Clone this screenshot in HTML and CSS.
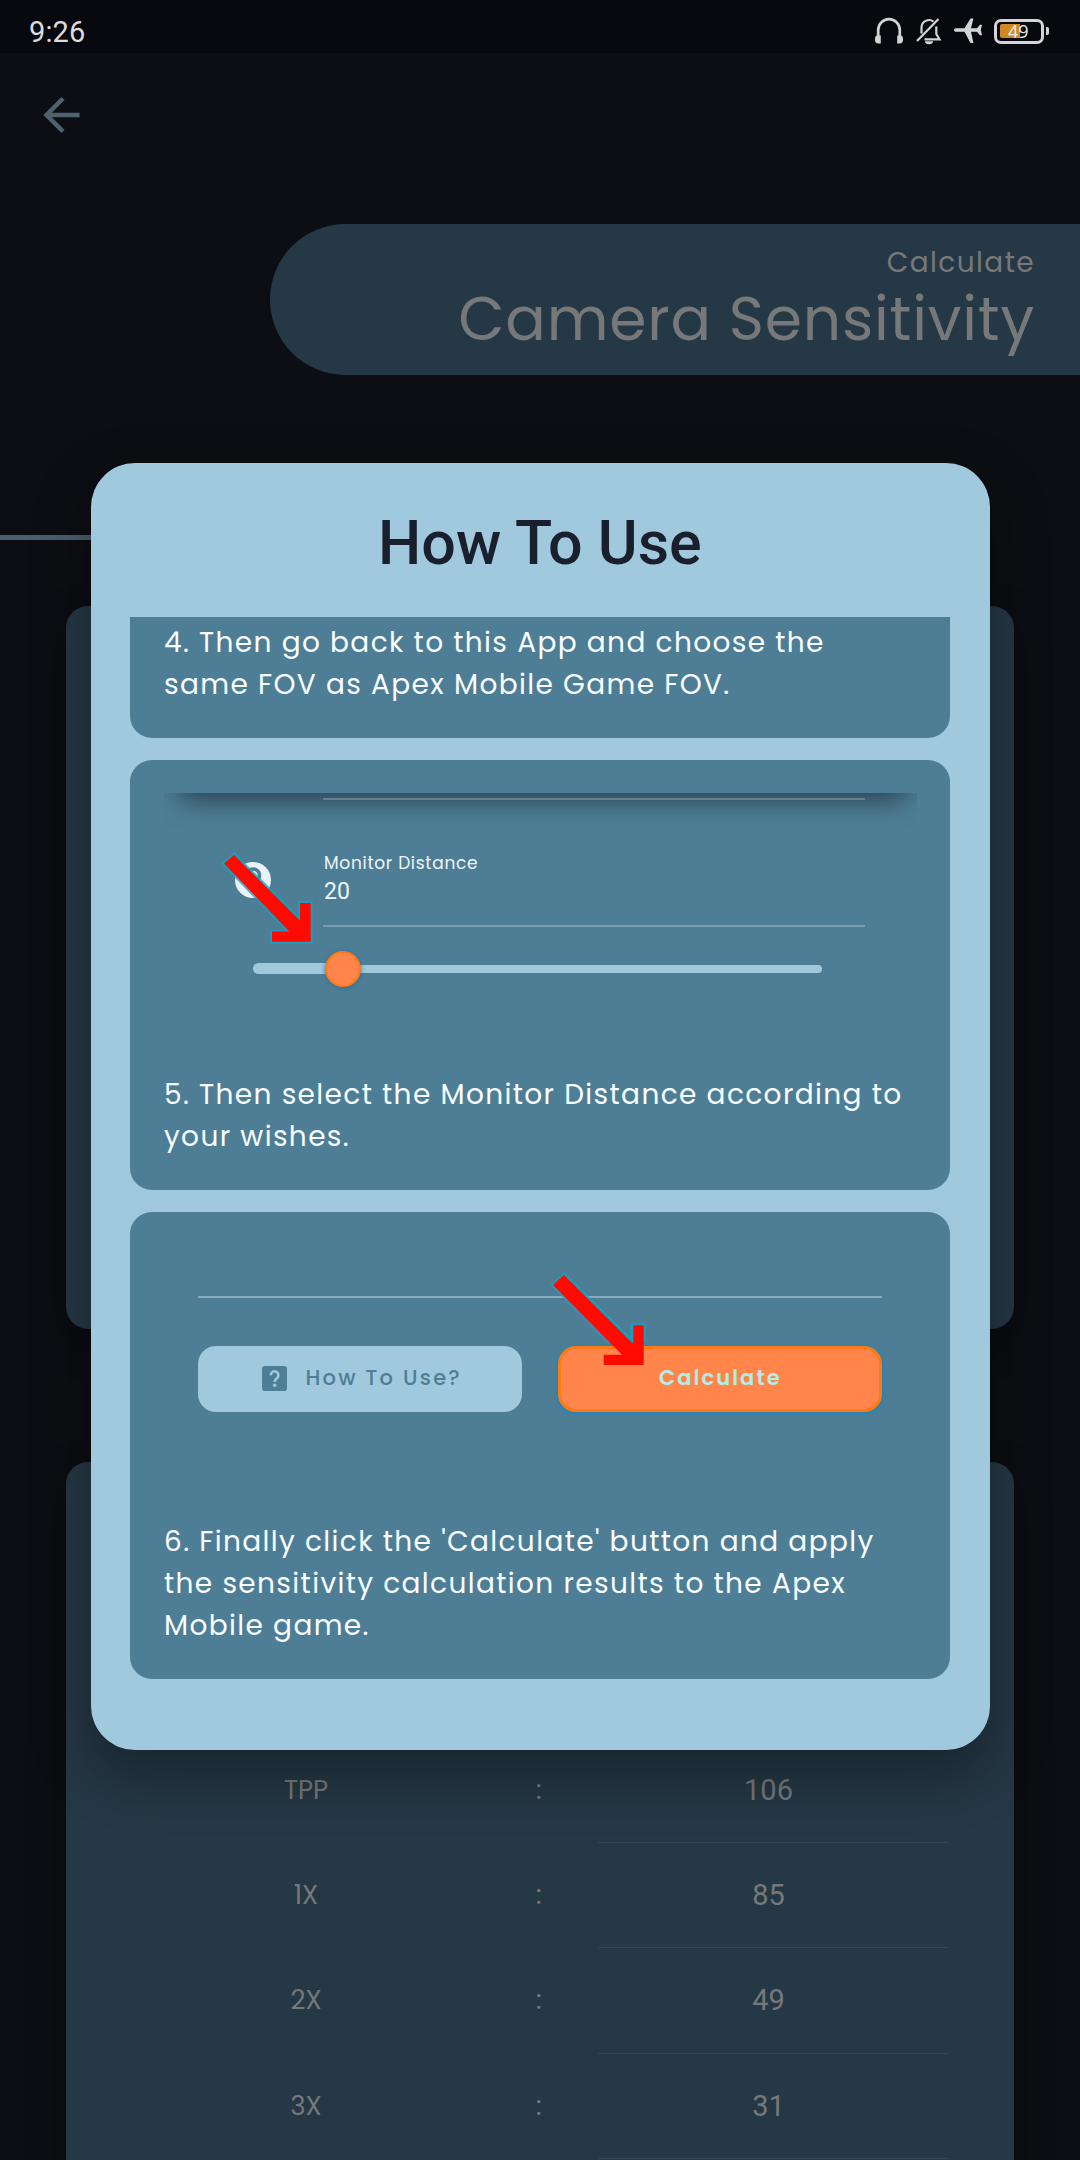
FILE: index.html
```html
<!DOCTYPE html>
<html lang="en">
<head>
<meta charset="utf-8">
<title>Camera Sensitivity</title>
<link rel="stylesheet" href="styles.css">
</head>
<body>
<div class="screen">
  <header class="status">
    <span class="time">9:26</span>
    <div class="status-icons">
      <svg class="ic-head" viewBox="0 0 28 26"><path d="M3.2 19V12A10.8 10.8 0 0 1 24.8 12V19" fill="none" stroke="#d4d4d4" stroke-width="2.7"/><path d="M2 17.5h3.8v7.9H3.4A3.4 3.4 0 0 1 0 22v-1.500a3 3 0 0 1 2-3zM26 17.500h-3.800v7.900h2.400A3.400 3.400 0 0 0 28 22v-1.500a3 3 0 0 0-2-3z" fill="#d4d4d4"/></svg>
      <svg class="ic-bell" viewBox="0 0 26 26"><g fill="none" stroke="#d4d4d4" stroke-width="2.2"><path d="M5.500 15.500V9.500A7.500 7.500 0 0 1 17.500 3.600M20.300 8.500v7.500l3.200 5.300H8.500M1 23 22.500 1"/></g><path d="M9 23.200h8a4 3 0 0 1-8 0z" fill="#d4d4d4"/></svg>
      <svg class="ic-plane" viewBox="0 0 28 26"><path d="M0 12c0-1 1-1.800 2-1.800h8.500L16.500.5h2.900L17 10.200H23l3-3.400h2L26.800 12l1.200 5.200h-2l-3-3.400h-6l2.400 11.300h-2.900L10.500 13.800H2c-1 0-2-.8-2-1.800z" fill="#d4d4d4"/></svg>
      <div class="battery"><div class="battery-fill"></div><span class="battery-num">49</span></div>
      <div class="battery-tip"></div>
    </div>
  </header>

  <nav class="appbar">
    <svg class="back" viewBox="0 0 36 36"><path d="M35.500 18H3M19 1.500 2.500 18 19 34.500" fill="none" stroke="#4e626e" stroke-width="4.500"/></svg>
  </nav>

  <div class="pill">
    <div class="pill-small">Calculate</div>
    <div class="pill-big">Camera Sensitivity</div>
  </div>
  <div class="rule"></div>
  <section class="panel form-panel"></section>
  <section class="panel results">
    <div class="row"><span class="name">TPP</span><span class="colon">:</span><span class="val">106</span></div>
    <div class="row"><span class="name">1X</span><span class="colon">:</span><span class="val">85</span></div>
    <div class="row"><span class="name">2X</span><span class="colon">:</span><span class="val">49</span></div>
    <div class="row"><span class="name">3X</span><span class="colon">:</span><span class="val">31</span></div>
  </section>

  <div class="dialog">
    <h1 class="title">How To Use</h1>
    <div class="steps">
      <article class="step step-4">
        <p class="text">4. Then go back to this App and choose the<br>same FOV as Apex Mobile Game FOV.</p>
      </article>
      <article class="step step-5">
        <div class="demo demo-distance">
          <div class="demo-shadow"></div>
          <div class="field field-top"></div>
          <div class="field">
            <svg class="help" viewBox="0 0 36 36"><circle cx="18" cy="18" r="18" fill="#e9f2f6"/><path d="M11.500 13.500a6.500 6.500 0 1 1 10 5.500q-3.500 2-3.500 5" fill="none" stroke="#4e7e95" stroke-width="3.500"/><circle cx="18" cy="28.500" r="2.200" fill="#4e7e95"/></svg>
            <div class="field-body"><div class="field-label">Monitor Distance</div><div class="field-value">20</div></div>
          </div>
          <div class="slider"><div class="slider-on"></div><div class="slider-off"></div><div class="thumb"></div></div>
          <svg class="arrow arrow-distance" viewBox="-4 -4 96 96"><path d="M10 0 76 65.500V48H86.700V86.700H48V76.400H65.300L0 8.400z" fill="none" stroke="#15a2c6" stroke-opacity=".8" stroke-width="4"/><path d="M10 0 76 65.500V48H86.700V86.700H48V76.400H65.300L0 8.400z" fill="#ff0a00"/></svg>
        </div>
        <p class="text">5. Then select the Monitor Distance according to<br>your wishes.</p>
      </article>
      <article class="step step-6">
        <div class="demo demo-buttons">
          <div class="demo-rule"></div>
          <div class="buttons">
            <div class="btn btn-how">
              <svg class="q" viewBox="0 0 25 25"><rect width="25" height="25" rx="2.800" fill="#4e7e95"/><path d="M8.800 9.300a3.800 3.800 0 1 1 6.300 2.700q-2.400 1.800-2.400 4" fill="none" stroke="#9fc8dc" stroke-width="2.600"/><circle cx="12.700" cy="19.300" r="1.800" fill="#9fc8dc"/></svg>
              <span>How To Use?</span>
            </div>
            <div class="btn btn-calc"><span>Calculate</span></div>
          </div>
          <svg class="arrow arrow-calc" viewBox="-4 -4 98 98"><path d="M57 67 0 10 11 0 79 67V50.300H90.700V67" fill="none" stroke="#15a2c6" stroke-opacity=".8" stroke-width="4"/><path d="M11 0 80.300 69V50.300H90.700V90H50.700V79.700H69L0 10z" fill="#ff0a00"/></svg>
        </div>
        <p class="text">6. Finally click the 'Calculate' button and apply<br>the sensitivity calculation results to the Apex<br>Mobile game.</p>
      </article>
    </div>
  </div>
</div>
</body>
</html>
```
FILE: styles.css
```css
* { box-sizing: border-box; }
body { margin: 0; background: #0d0e13; font-family: Poppins, Inter, sans-serif; }
svg { display: block; overflow: visible; flex: none; }

.screen { position: relative; width: 1080px; height: 2160px; overflow: hidden; display: flex; flex-direction: column; }

.status { height: 53px; flex: none; background: #07090e; display: flex; justify-content: space-between; padding: 0 31px 0 29px; }
.time { font: 400 29px/65px Roboto, sans-serif; color: #dcdcdc; letter-spacing: .1px; }
.status-icons { display: flex; align-items: center; height: 62px; }
.ic-head { width: 28px; height: 26px; margin-right: 13px; }
.ic-bell { width: 26px; height: 26px; margin-right: 12px; }
.ic-plane { width: 28px; height: 26px; margin-right: 12px; }
.battery { position: relative; width: 50px; height: 25px; border: 3px solid #d4d4d4; border-radius: 7px; padding: 2.500px; }
.battery-fill { width: 20px; height: 14px; border-radius: 2px 0 0 2px; background: #cf8b22; }
.battery-num { position: absolute; inset: 0 0 0 7px; font: 500 18px/18px "Open Sans", sans-serif; color: #eee; padding-left: 4px; }
.battery-tip { width: 3px; height: 8px; margin: 0 0 0 2px; background: #d4d4d4; border-radius: 0 2px 2px 0; }

.appbar { height: 170px; flex: none; padding: 43.500px 0 0 44px; }
.back { width: 36px; height: 36px; }

.pill { flex: none; height: 151px; margin: .5px 0 0 270px; padding: 18.500px 45px 0 0; border-radius: 76px 0 0 76px; background: #253845; color: #777879; text-align: right; }
.pill-small { font-size: 28px; line-height: 41px; letter-spacing: 1.400px; }
.pill-big { font-size: 60px; line-height: 72px; letter-spacing: .8px; }

.rule { flex: none; width: 300px; height: 5px; margin-top: 160.500px; background: #4a5f6b; }

.panel { flex: none; width: 948px; margin-left: 66px; border-radius: 22px; background: #253845; box-shadow: 0 14px 36px rgba(0, 0, 0, .35); }
.form-panel { height: 723px; margin-top: 66px; }
.results { height: 900px; margin-top: 133px; padding: 275.500px 66px 0 0; }
.row { height: 105.400px; display: grid; grid-template-columns: 462px 70px 350px; color: #777879; }
.name { text-align: center; font-size: 26px; line-height: 105px; padding-left: 18px; letter-spacing: -.1px; }
.colon { font-size: 26px; line-height: 105px; padding-left: 8px; }
.val { font: 400 29px/105px Roboto, sans-serif; text-align: center; padding-right: 9px; height: 105.400px; border-bottom: 1.500px solid #334650; }

/* Dialog */
.dialog { position: absolute; left: 90.500px; top: 463px; width: 899px; height: 1287px; border-radius: 44px; background: #a0c9dd; padding: 44px 39.700px 0 39.500px; box-shadow: 0 22px 54px 6px rgba(0, 0, 0, .32); }
.title { margin: 0 0 38px; font: 500 61px/72px Roboto, sans-serif; text-align: center; color: #1a1f2e; }
.steps { display: flex; flex-direction: column; gap: 22px; }
.step { background: #4e7e95; border-radius: 22px; padding: 33px 33px 33px 34px; color: #f8fcfe; }
.step-4 { height: 121px; padding-top: 5px; border-radius: 0 0 22px 22px; }
.step-5 { height: 430px; }
.step-6 { height: 467px; }
.text { margin: 0; font-size: 28px; line-height: 42px; letter-spacing: 1.360px; white-space: nowrap; }
.demo { position: relative; }
.arrow { position: absolute; }

.demo-distance { height: 281px; overflow: hidden; }
.demo-shadow { position: absolute; left: 18px; right: 14px; top: -33px; height: 32px; border-radius: 6px; box-shadow: 0 4px 26px 4px rgba(30, 45, 55, .75); }
.field { position: relative; display: flex; height: 126.500px; margin: 0 52px 0 71px; }
.field-top { height: 7px; }
.field::after { content: ""; position: absolute; left: 88px; right: 0; bottom: 0; height: 2px; background: #7a9db0; }
.field-top::after { background: #63808f; }
.help { width: 36px; height: 36px; margin: 62px 53px 0 0; }
.field-body { color: #eef5f8; padding-top: 50px; }
.field-label { font-size: 17px; line-height: 27px; letter-spacing: .7px; }
.field-value { font: 400 23px/30px Roboto, sans-serif; }
.slider { position: relative; display: flex; align-items: center; height: 36px; margin: 24px 95px 0 89px; }
.slider-on { width: 90px; height: 11px; border-radius: 6px 0 0 6px; background: #a0c9dd; }
.slider-off { flex: 1; height: 8px; border-radius: 0 4px 4px 0; background: #a0c9dd; }
.thumb { position: absolute; left: 72px; top: 0; width: 36px; height: 36px; border-radius: 50%; border: 2.500px solid #ff7a14; background: #ff854b; box-shadow: 0 1px 4px rgba(15, 110, 170, .8); }
.arrow-distance { left: 56px; top: 57.500px; width: 96px; height: 96px; }

.demo-buttons { height: 275.500px; padding: 51px 35px 0 34px; }
.demo-rule { height: 2px; background: #88adbf; }
.buttons { display: grid; grid-template-columns: 1fr 1fr; gap: 36px; margin-top: 47.500px; }
.btn { height: 66.500px; border-radius: 18px; display: flex; align-items: center; font-size: 21px; line-height: 30px; }
.btn span { margin-top: -1px; }
.btn-how { background: #a0c9dd; color: #4e7e95; font-weight: 500; letter-spacing: 2.250px; padding-left: 63.500px; }
.q { width: 25px; height: 25px; margin-right: 19px; }
.btn-calc { justify-content: center; background: #ff854b; border: 3px solid #ff7a14; color: #b4ece8; font-weight: 600; letter-spacing: 2.100px; box-shadow: 0 1px 4px 1px #1b86bd; }
.btn-calc span { margin-left: 1px; }
.arrow-calc { left: 385px; top: 26px; width: 98px; height: 98px; }
```
